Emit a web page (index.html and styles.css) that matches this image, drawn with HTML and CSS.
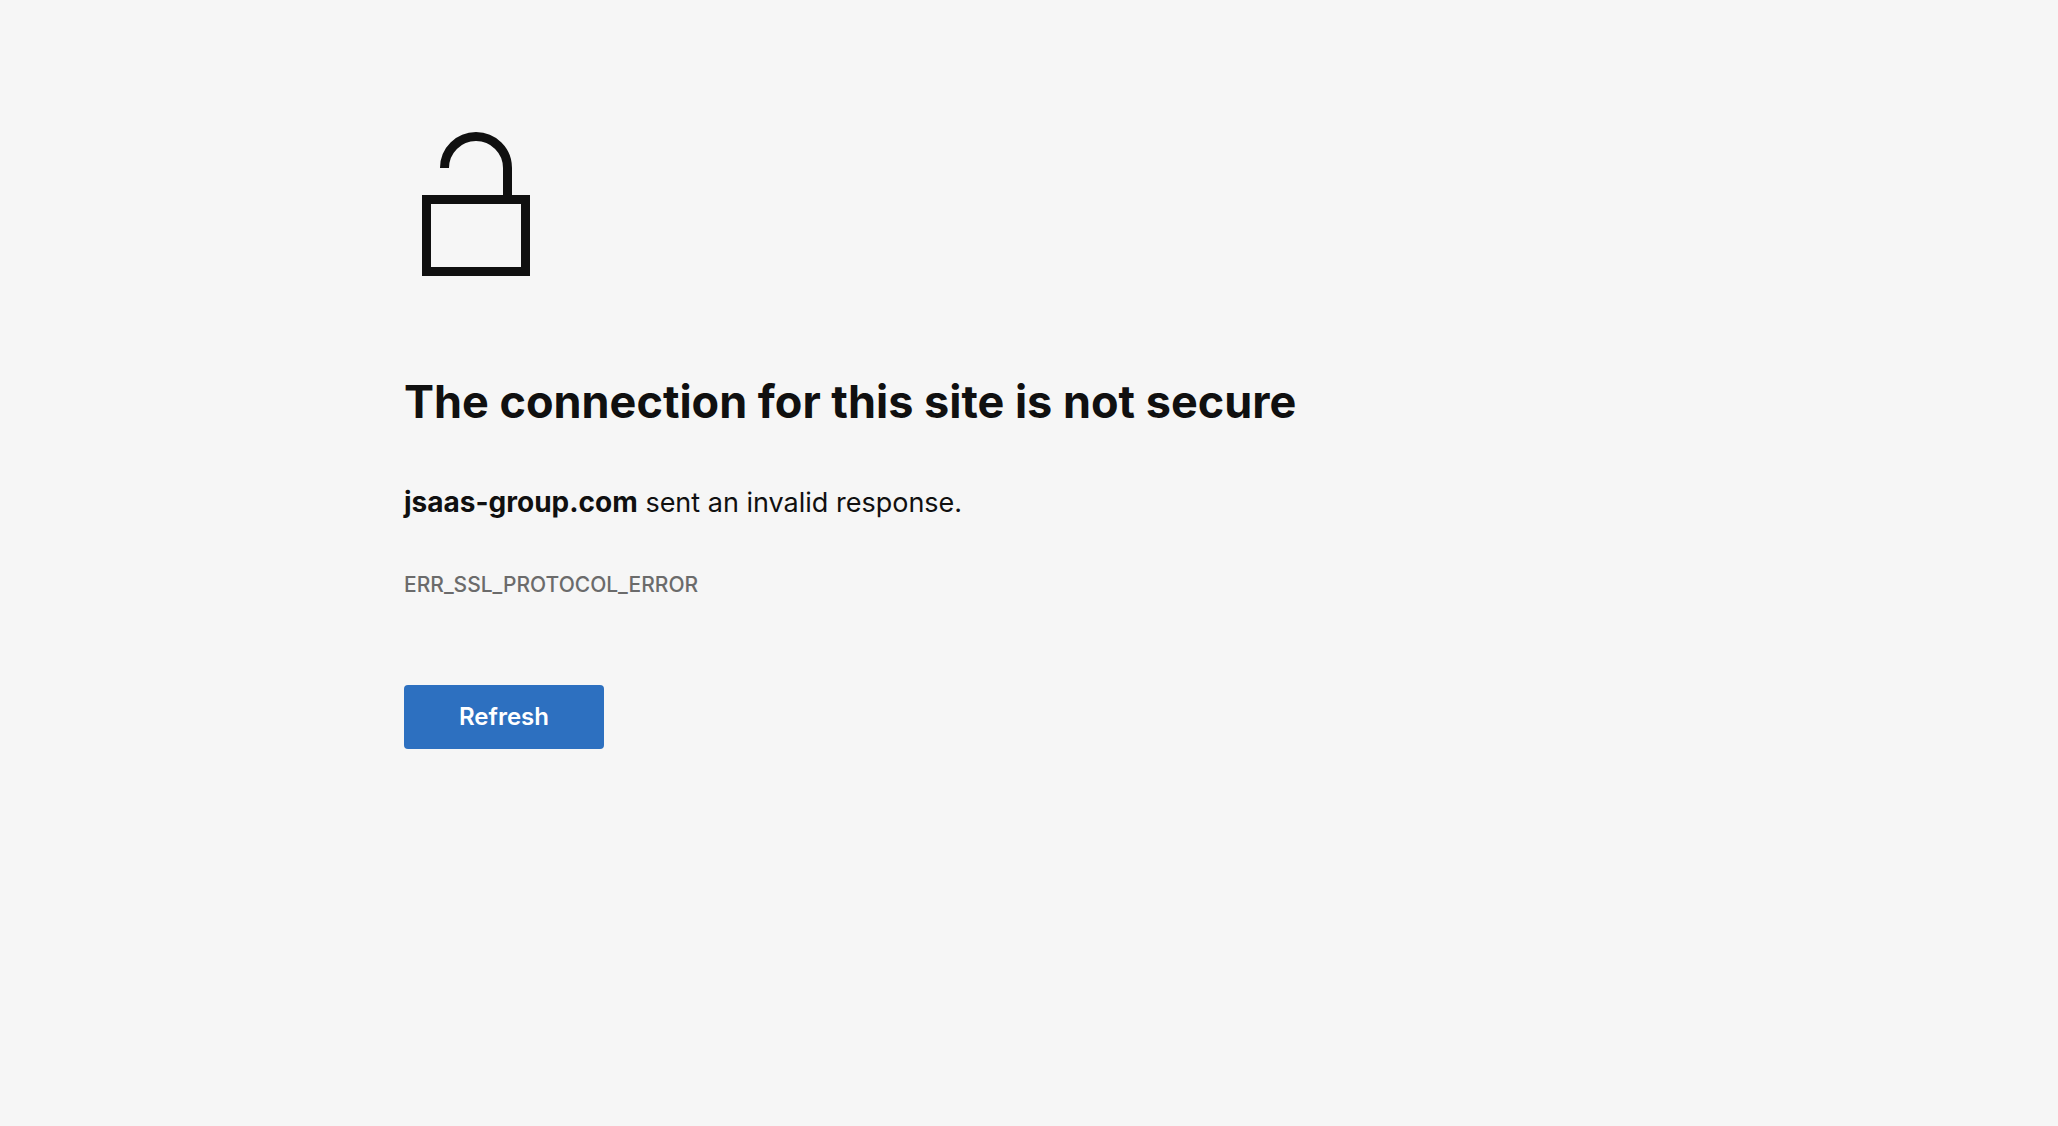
FILE: index.html
```html
<!DOCTYPE html>
<html lang="en">
<head>
<meta charset="utf-8">
<meta name="viewport" content="width=device-width, initial-scale=1">
<title>jsaas-group.com</title>
<link rel="stylesheet" href="styles.css">
</head>
<body>
<main class="error-page">
  <svg class="lock-icon" viewBox="0 0 144 144" aria-hidden="true">
    <path d="M40.500 36a31.500 31.500 0 0 1 63 0v31.500M22.500 67.500h99v72h-99z" fill="none" stroke="currentColor" stroke-width="9"/>
  </svg>
  <h1 class="title">The connection for this site is not secure</h1>
  <p class="summary"><strong>jsaas-group.com</strong> sent an invalid response.</p>
  <p class="error-code">ERR_SSL_PROTOCOL_ERROR</p>
  <button class="refresh" type="button">Refresh</button>
</main>
</body>
</html>
```
FILE: styles.css
```css
body {
  margin: 0;
  background: #f6f6f6;
  color: #101010;
  font-family: Inter, "Liberation Sans", sans-serif;
}

.error-page {
  box-sizing: border-box;
  max-width: 1250px;
  margin: 0 auto;
  padding: 132px 0 64px;
}

.lock-icon {
  display: block;
  width: 144px;
  height: 144px;
}

.title {
  margin: 96px 0 0;
  font-size: 45px;
  line-height: 60px;
  font-weight: 700;
}

.summary {
  margin: 50px 0 0;
  font-size: 27px;
  line-height: 40px;
}

.summary strong {
  font-size: 28px;
  font-weight: 700;
}

.error-code {
  margin: 48px 0 0;
  color: #6b6b6b;
  font-size: 21px;
  line-height: 28px;
  font-weight: 500;
}

.refresh {
  display: block;
  width: 200px;
  height: 64px;
  margin: 86px 0 0;
  border: 0;
  border-radius: 4px;
  background: #2d70c0;
  color: #fff;
  font: 600 24px/32px Inter, "Liberation Sans", sans-serif;
}
```
